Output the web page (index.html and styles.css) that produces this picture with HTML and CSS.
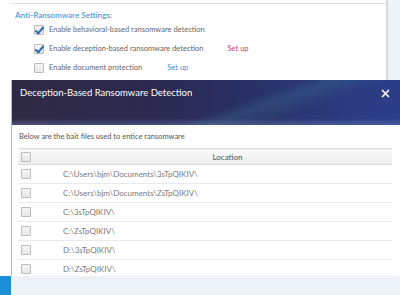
FILE: index.html
```html
<!DOCTYPE html>
<html lang="en">
<head>
  <meta charset="UTF-8">
  <title>Deception-Based Ransomware Detection</title>
  <link rel="stylesheet" href="styles.css">
</head>
<body>
  <div class="settings">
    <div class="topline"></div>
    <h2 class="section-title">Anti-Ransomware Settings:</h2>
    <ul class="options">
      <li><span class="cb checked"></span><span class="label">Enable behavioral-based ransomware detection</span></li>
      <li><span class="cb checked"></span><span class="label">Enable deception-based ransomware detection</span><a class="setup pink">Set up</a></li>
      <li><span class="cb"></span><span class="label">Enable document protection</span><a class="setup">Set up</a></li>
    </ul>
  </div>
  <div class="footer"><div class="footer-tab"></div></div>

  <div class="dialog">
    <div class="dialog-head">
      <span class="dialog-title">Deception-Based Ransomware Detection</span>
      <svg class="close" width="9" height="9" viewBox="0 0 9 9"><path d="M1 1L8 8M8 1L1 8" stroke="#fff" stroke-width="1.6"/></svg>
    </div>
    <div class="dialog-body">
      <p class="desc">Below are the bait files used to entice ransomware</p>
      <table class="files">
        <thead>
          <tr><th class="col-cb"><span class="cb"></span></th><th>Location</th></tr>
        </thead>
        <tbody id="rows"></tbody>
      </table>
    </div>
  </div>

  <script>
    const files = [
      "C:\\Users\\bjm\\Documents\\3sTpQIKIV\\",
      "C:\\Users\\bjm\\Documents\\ZsTpQIKIV\\",
      "C:\\3sTpQIKIV\\",
      "C:\\ZsTpQIKIV\\",
      "D:\\3sTpQIKIV\\",
      "D:\\ZsTpQIKIV\\"
    ];
    const tbody = document.getElementById("rows");
    files.forEach(f => {
      const row = document.createElement("tr");
      row.innerHTML = `<td class="col-cb"><span class="cb"></span></td><td class="path"></td>`;
      row.querySelector(".path").textContent = f;
      tbody.appendChild(row);
    });
  </script>
</body>
</html>
```

FILE: styles.css
```css
html, body {
  margin: 0;
  padding: 0;
}

body {
  width: 400px;
  height: 295px;
  overflow: hidden;
  position: relative;
  background-color: #eef3f8;
  font-family: Lato, "Open Sans", sans-serif;
  color: #555;
}

.settings {
  width: 388px;
  height: 276px;
  background-color: #fff;
  border-right: 2px solid #d6dadf;
  padding-top: 3px;
  box-sizing: border-box;
}

.topline {
  margin-left: 10px;
  border-top: 1px solid #dcdfe2;
}

.section-title {
  margin: 6px 0 0 15px;
  font-size: 8.1px;
  line-height: 10px;
  font-weight: 600;
  color: #4b9ad9;
}

.options {
  list-style: none;
  margin: 0;
  padding: 0 0 0 34px;
}

.options li {
  display: flex;
  align-items: center;
  height: 19px;
  font-size: 7.5px;
  color: #666;
}

.cb {
  display: inline-block;
  width: 8px;
  height: 8px;
  border: 1px solid #bcbcbc;
  background: linear-gradient(#f6f6f6, #e6e6e6);
  border-radius: 1px;
  position: relative;
  flex: none;
}

.cb.checked::after {
  content: "";
  position: absolute;
  left: 2px;
  top: -1px;
  width: 3px;
  height: 7px;
  border-right: 2px solid #2c6db3;
  border-bottom: 2px solid #2c6db3;
  transform: rotate(40deg);
}

.options .label {
  margin-left: 5px;
}

.setup {
  margin-left: 25px;
  color: #3d8fd6;
  font-size: 7.5px;
}

.setup.pink {
  margin-left: 24px;
  color: #c2427f;
}

.footer {
  height: 19px;
  display: flex;
}

.footer-tab {
  width: 11px;
  background-color: #1b8ed7;
}

/* dialog lies over the settings window */
.dialog {
  position: absolute;
  left: 11px;
  top: 80px;
  width: 400px;
  height: 196px;
  border-left: 1px solid #b7bcc2;
  background-color: #fff;
}

.dialog-head {
  height: 45px;
  display: flex;
  align-items: flex-start;
  padding: 7px 22px 0 8px;
  box-sizing: border-box;
  background:
    linear-gradient(180deg, rgba(255,255,255,0) 85%, rgba(120,150,210,0.35) 100%),
    linear-gradient(160deg, rgba(0,0,0,0) 55%, rgba(60,120,150,0.3) 62%, rgba(0,0,0,0) 72%),
    linear-gradient(90deg, #2f2a42 0%, #2c2950 35%, #2a3166 60%, #2a3b80 85%, #2d3f8a 100%);
}

.dialog-title {
  font-size: 9.5px;
  line-height: 12px;
  color: #fff;
}

.close {
  margin-left: auto;
  margin-top: 2px;
}

.dialog-body {
  padding: 0 0 0 6px;
}

.desc {
  margin: 6px 0 5px 1px;
  font-size: 7.5px;
  line-height: 12px;
  color: #555;
}

.files {
  width: 374px;
  border-collapse: collapse;
  font-size: 8px;
}

.files th {
  height: 15px;
  padding: 0;
  font-weight: normal;
  color: #555;
  background: linear-gradient(#fafafa, #ededed);
  border: 1px solid #dadada;
  border-left: none;
  border-right: none;
}

.files th.col-cb,
.files td.col-cb {
  width: 42px;
  padding-left: 3px;
  text-align: left;
}

.files td {
  height: 18px;
  padding: 0;
  border-bottom: 1px solid #e8ebee;
  color: #7a7a7a;
}

.files .cb {
  vertical-align: middle;
}
```
